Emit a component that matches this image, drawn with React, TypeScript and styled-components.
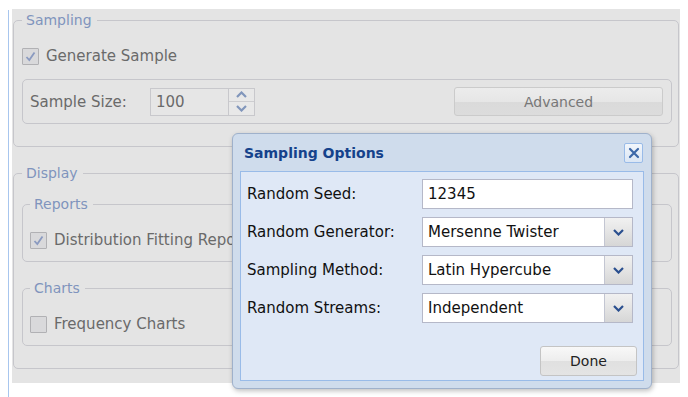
import styled, { createGlobalStyle } from 'styled-components'

const GlobalStyle = createGlobalStyle`
  html, body {
    margin: 0;
    padding: 0;
    background: #ffffff;
  }
  body {
    font-family: "DejaVu Sans", Verdana, sans-serif;
  }
`

const Page = styled.div`
  position: relative;
  display: flex;
  width: 688px;
  height: 397px;
  padding: 9px 0 0 8px;
  box-sizing: border-box;
  overflow: hidden;
`

const Rule = styled.div`
  width: 1px;
  margin-top: 1px;
  background: #a8c6ee;
`

const Panel = styled.div`
  margin-left: 3px;
  width: 668px;
  height: 374px;
  padding: 0 1px;
  box-sizing: border-box;
  background: #e4e4e4;
  display: flex;
  flex-direction: column;
`

const Group = styled.fieldset<{ $height: number; $top: number; $inset?: boolean }>`
  margin: ${({ $top }) => $top}px 0 0 0;
  height: ${({ $height }) => $height}px;
  box-sizing: border-box;
  padding: 0 ${({ $inset }) => ($inset ? 7 : 6)}px 0 ${({ $inset }) => ($inset ? 7 : 8)}px;
  border: 1px solid #c6c6cb;
  border-radius: 5px;
  min-width: 0;
  display: flex;
  flex-direction: column;
`

const Legend = styled.legend`
  padding: 0 5px 0 4px;
  font-size: 14px;
  line-height: 18px;
  color: #8094bd;
`

const CheckRow = styled.label<{ $top: number }>`
  display: flex;
  align-items: center;
  gap: 7px;
  height: 22px;
  margin-top: ${({ $top }) => $top}px;
  font-size: 15px;
  color: #6a6a6a;
  white-space: nowrap;
`

const Box = styled.span`
  width: 15px;
  height: 15px;
  border: 1px solid #b1b1b4;
  background: #d9d9db;
  border-radius: 1px;
  display: flex;
  align-items: center;
  justify-content: center;
  flex: none;
`

const SizeRow = styled.div`
  margin-top: 12px;
  height: 45px;
  box-sizing: border-box;
  padding: 0 8px 0 7px;
  border: 1px solid #c6c6cb;
  border-radius: 5px;
  display: flex;
  align-items: center;
`

const SizeLabel = styled.span`
  width: 120px;
  font-size: 15px;
  color: #6a6a6a;
`

const Spinner = styled.div`
  display: flex;
  height: 28px;
  border: 1px solid #c8c8cc;
  box-sizing: border-box;
`

const SpinValue = styled.div`
  width: 77px;
  padding-left: 5px;
  box-sizing: border-box;
  display: flex;
  align-items: center;
  font-size: 15px;
  color: #6a6a6a;
  background: #e6e6e6;
`

const SpinButtons = styled.div`
  width: 25px;
  display: flex;
  flex-direction: column;
  border-left: 1px solid #c8c8cc;
`

const SpinButton = styled.div<{ $last?: boolean }>`
  flex: 1;
  display: flex;
  align-items: center;
  justify-content: center;
  background: #e8e8e8;
  border-top: ${({ $last }) => ($last ? '1px solid #cdcdd0' : 'none')};
`

const GrayButton = styled.div`
  margin-left: auto;
  width: 209px;
  height: 29px;
  box-sizing: border-box;
  border: 1px solid #cbcbcb;
  border-radius: 3px;
  background: linear-gradient(#ececec 0%, #e6e6e6 50%, #dadada 51%, #dcdcdc 100%);
  display: flex;
  align-items: center;
  justify-content: center;
  font-size: 14px;
  color: #777777;
`

const Dialog = styled.div`
  position: absolute;
  left: 232px;
  top: 133px;
  width: 420px;
  height: 256px;
  box-sizing: border-box;
  border: 1px solid #9fb1cb;
  border-radius: 6px;
  background: #cfdcec;
  box-shadow: 1px 2px 5px rgba(0, 0, 0, 0.25);
  padding: 0 7px 7px 7px;
  display: flex;
  flex-direction: column;
`

const TitleBar = styled.div`
  height: 37px;
  display: flex;
  align-items: center;
  padding: 0 1px 0 4px;
`

const Title = styled.div`
  font-size: 14px;
  font-weight: bold;
  color: #15428b;
`

const Close = styled.div`
  margin-left: auto;
  width: 19px;
  height: 20px;
  box-sizing: border-box;
  border: 1px solid #99bbe8;
  border-radius: 2px;
  background: linear-gradient(#f2f6fb, #dbe6f4);
  display: flex;
  align-items: center;
  justify-content: center;
`

const Body = styled.div`
  flex: 1;
  border: 1px solid #99bbe8;
  background: #dfe8f6;
  padding: 7px 9px 4px 6px;
  display: flex;
  flex-direction: column;
  gap: 8px;
`

const FieldRow = styled.div`
  display: flex;
  align-items: center;
  height: 30px;
`

const FieldLabel = styled.span`
  width: 175px;
  font-size: 15px;
  color: #111111;
`

const Input = styled.div`
  width: 211px;
  height: 30px;
  box-sizing: border-box;
  border: 1px solid #b5b8c8;
  background: #ffffff;
  display: flex;
  align-items: center;
  font-size: 15px;
  color: #111111;
`

const InputText = styled.span`
  flex: 1;
  padding-left: 5px;
`

const Trigger = styled.div`
  width: 27px;
  height: 100%;
  border-left: 1px solid #c3c6d2;
  background: linear-gradient(#f1f1f1 0%, #e4e4e4 50%, #d6d6d6 100%);
  display: flex;
  align-items: center;
  justify-content: center;
`

const Footer = styled.div`
  margin-top: auto;
  display: flex;
  justify-content: flex-end;
`

const Done = styled.div`
  width: 97px;
  height: 30px;
  margin-right: -3px;
  box-sizing: border-box;
  border: 1px solid #c4c4c4;
  border-radius: 3px;
  background: linear-gradient(#f8f8f8 0%, #ededed 50%, #e0e0e0 51%, #e4e4e4 100%);
  display: flex;
  align-items: center;
  justify-content: center;
  font-size: 14px;
  color: #222222;
`

const Check = () => (
  <svg width="11" height="11" viewBox="0 0 11 11">
    <path d="M1.5 6 L4.3 9 L9.5 1.5" fill="none" stroke="#8a9ac0" strokeWidth="1.8" />
  </svg>
)

const Chevron = ({ up, color }: { up?: boolean; color: string }) => (
  <svg width="11" height="7" viewBox="0 0 11 7">
    <path
      d={up ? 'M1 6 L5.5 1.5 L10 6' : 'M1 1 L5.5 5.5 L10 1'}
      fill="none"
      stroke={color}
      strokeWidth="2.2"
    />
  </svg>
)

const selects = [
  { label: 'Random Generator:', value: 'Mersenne Twister' },
  { label: 'Sampling Method:', value: 'Latin Hypercube' },
  { label: 'Random Streams:', value: 'Independent' },
]

export default function App() {
  return (
    <>
      <GlobalStyle />
      <Page>
        <Rule />
        <Panel>
          <Group $top={2} $height={136}>
            <Legend>Sampling</Legend>
            <CheckRow $top={16}>
              <Box>
                <Check />
              </Box>
              Generate Sample
            </CheckRow>
            <SizeRow>
              <SizeLabel>Sample Size:</SizeLabel>
              <Spinner>
                <SpinValue>100</SpinValue>
                <SpinButtons>
                  <SpinButton>
                    <Chevron up color="#8196bb" />
                  </SpinButton>
                  <SpinButton $last>
                    <Chevron color="#8196bb" />
                  </SpinButton>
                </SpinButtons>
              </Spinner>
              <GrayButton>Advanced</GrayButton>
            </SizeRow>
          </Group>
          <Group $top={17} $height={205}>
            <Legend>Display</Legend>
            <Group $top={13} $height={67} $inset>
              <Legend>Reports</Legend>
              <CheckRow $top={16}>
                <Box>
                  <Check />
                </Box>
                Distribution Fitting Reports
              </CheckRow>
            </Group>
            <Group $top={17} $height={67} $inset>
              <Legend>Charts</Legend>
              <CheckRow $top={16}>
                <Box />
                Frequency Charts
              </CheckRow>
            </Group>
          </Group>
        </Panel>
        <Dialog>
          <TitleBar>
            <Title>Sampling Options</Title>
            <Close>
              <svg width="12" height="12" viewBox="0 0 12 12">
                <path d="M2 2 L10 10 M10 2 L2 10" stroke="#3d68a8" strokeWidth="2.2" strokeLinecap="round" />
              </svg>
            </Close>
          </TitleBar>
          <Body>
            <FieldRow>
              <FieldLabel>Random Seed:</FieldLabel>
              <Input>
                <InputText>12345</InputText>
              </Input>
            </FieldRow>
            {selects.map((s) => (
              <FieldRow key={s.label}>
                <FieldLabel>{s.label}</FieldLabel>
                <Input>
                  <InputText>{s.value}</InputText>
                  <Trigger>
                    <Chevron color="#2a4f8f" />
                  </Trigger>
                </Input>
              </FieldRow>
            ))}
            <Footer>
              <Done>Done</Done>
            </Footer>
          </Body>
        </Dialog>
      </Page>
    </>
  )
}
